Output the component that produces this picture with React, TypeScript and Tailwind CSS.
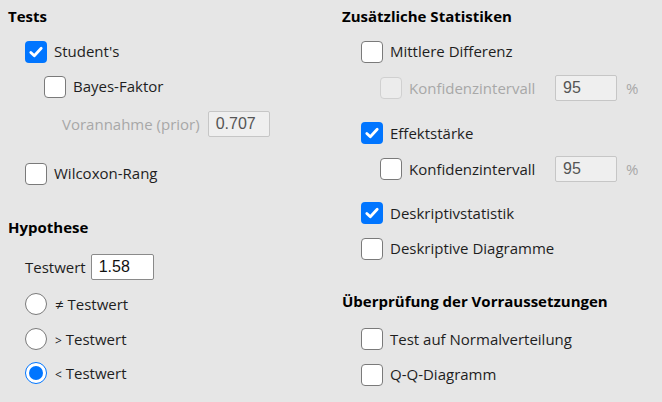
import type { ReactNode } from "react"

const FONT = "font-['Open_Sans','Noto_Sans',sans-serif]"

function Box({ checked = false, disabled = false }: { checked?: boolean; disabled?: boolean }) {
  if (checked) {
    return (
      <span className="flex h-[22px] w-[22px] shrink-0 items-center justify-center rounded-[4px] bg-[#0075ff]">
        <svg width="16" height="16" viewBox="0 0 16 16" fill="none" aria-hidden>
          <path d="M2.8 8.4 6.3 11.8 13.2 4.3" stroke="#fff" strokeWidth="2.8" strokeLinecap="round" strokeLinejoin="round" />
        </svg>
      </span>
    )
  }
  return (
    <span
      className={`h-[22px] w-[22px] shrink-0 rounded-[4px] border ${
        disabled ? "border-[#d0d0d0] bg-[#ececec]" : "border-[#7a7a7a] bg-white"
      }`}
    />
  )
}

function Radio({ checked = false }: { checked?: boolean }) {
  if (checked) {
    return (
      <span className="flex h-[22px] w-[22px] shrink-0 items-center justify-center rounded-full border-[1.5px] border-[#0075ff] bg-white">
        <span className="h-[14px] w-[14px] rounded-full bg-[#0075ff]" />
      </span>
    )
  }
  return <span className="h-[22px] w-[22px] shrink-0 rounded-full border border-[#7a7a7a] bg-white" />
}

function Row({ className = "", children }: { className?: string; children: ReactNode }) {
  return <div className={`flex items-center ${className}`}>{children}</div>
}

function Check({
  label,
  checked,
  disabled,
  className = "",
}: {
  label: string
  checked?: boolean
  disabled?: boolean
  className?: string
}) {
  return (
    <Row className={`h-[35px] gap-[7px] ${className}`}>
      <Box checked={checked} disabled={disabled} />
      <span className={disabled ? "text-[#a8a8a8]" : "text-[#1e1e1e]"}>{label}</span>
    </Row>
  )
}

function NumField({ value, disabled = true, width = "w-[62px]" }: { value: string; disabled?: boolean; width?: string }) {
  return (
    <span
      className={`flex h-[26px] ${width} items-center rounded-[2px] border px-[7px] font-['Liberation_Sans',Arial,sans-serif] text-[16px] ${
        disabled ? "border-[#c6c6c6] bg-[#efefef] text-[#555]" : "border-[#8a8a8a] bg-white text-[#111]"
      }`}
    >
      {value}
    </span>
  )
}

function Heading({ children, className = "" }: { children: ReactNode; className?: string }) {
  return <div className={`flex h-[32px] items-center font-bold text-black ${className}`}>{children}</div>
}

export default function App() {
  return (
    <div className={`flex h-[402px] w-[662px] bg-[#e6e6e6] text-[15px] ${FONT}`}>
      <div className="flex w-[334px] flex-col pl-[8px]">
        <Heading>Tests</Heading>
        <div className="mt-[2px] flex flex-col pl-[17px]">
          <Check label="Student's" checked />
          <Check label="Bayes-Faktor" className="ml-[19px]" />
          <Row className="ml-[37px] mt-[2px] h-[36px] gap-[8px]">
            <span className="text-[#a8a8a8]">Vorannahme (prior)</span>
            <NumField value="0.707" />
          </Row>
          <Check label="Wilcoxon-Rang" className="mt-[14px]" />
        </div>
        <Heading className="mt-[20px]">Hypothese</Heading>
        <div className="mt-[6px] flex flex-col pl-[17px]">
          <Row className="h-[36px] gap-[5px]">
            <span className="text-[#1e1e1e]">Testwert</span>
            <NumField value="1.58" disabled={false} width="w-[63px]" />
          </Row>
          <Row className="mt-[1px] h-[36px] gap-[8px]">
            <Radio />
            <span className="text-[#1e1e1e]">≠ Testwert</span>
          </Row>
          <Row className="h-[34px] gap-[8px]">
            <Radio />
            <span className="text-[#1e1e1e]">
              <span className="text-[12px]">&gt;</span> Testwert
            </span>
          </Row>
          <Row className="h-[34px] gap-[8px]">
            <Radio checked />
            <span className="text-[#1e1e1e]">
              <span className="text-[12px]">&lt;</span> Testwert
            </span>
          </Row>
        </div>
      </div>

      <div className="flex flex-1 flex-col pl-[8px]">
        <Heading>Zusätzliche Statistiken</Heading>
        <div className="mt-[2px] flex flex-col pl-[19px]">
          <Check label="Mittlere Differenz" />
          <Row className="ml-[19px] mt-[1px] h-[36px]">
            <Check label="Konfidenzintervall" disabled className="w-[175px]" />
            <NumField value="95" />
            <span className="ml-[9px] text-[#a8a8a8]">%</span>
          </Row>
          <Check label="Effektstärke" checked className="mt-[9px] h-[36px]" />
          <Row className="ml-[19px] h-[36px]">
            <Check label="Konfidenzintervall" className="w-[175px]" />
            <NumField value="95" />
            <span className="ml-[9px] text-[#a8a8a8]">%</span>
          </Row>
          <Check label="Deskriptivstatistik" checked className="mt-[8px] h-[36px]" />
          <Check label="Deskriptive Diagramme" className="h-[35px]" />
        </div>
        <Heading className="mt-[19px]">Überprüfung der Vorraussetzungen</Heading>
        <div className="mt-[4px] flex flex-col pl-[19px]">
          <Check label="Test auf Normalverteilung" className="h-[36px]" />
          <Check label="Q-Q-Diagramm" />
        </div>
      </div>
    </div>
  )
}
